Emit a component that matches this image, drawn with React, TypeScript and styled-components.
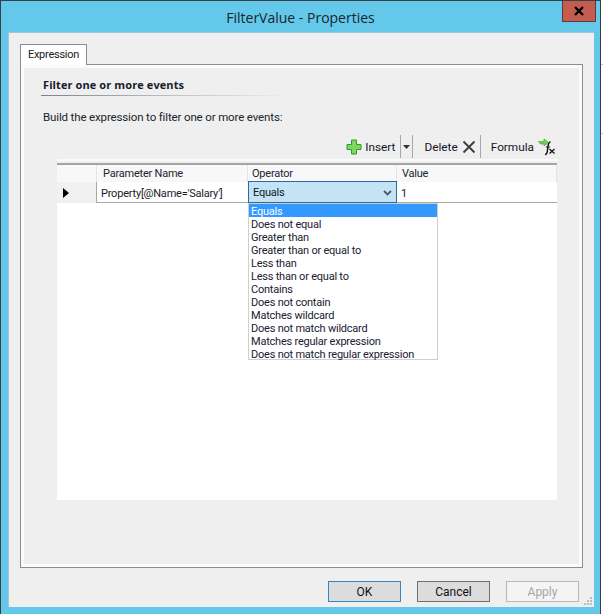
import styled, { createGlobalStyle } from "styled-components";

const GlobalStyle = createGlobalStyle`
  html, body {
    margin: 0;
    padding: 0;
    background: #fdfdfd;
    font-family: Roboto, "Open Sans", sans-serif;
    font-size: 11px;
    color: #101820;
  }
`;

const Desktop = styled.div`
  display: flex;
  width: 603px;
  height: 614px;
  overflow: hidden;
`;

const Side = styled.div`
  flex: 1;
  display: flex;
  flex-direction: column;
  padding-top: 64px;
  gap: 68px;
`;

const SideTick = styled.div`
  height: 1px;
  background: #c8c8c8;
`;

const Window = styled.div`
  width: 601px;
  height: 614px;
  box-sizing: border-box;
  display: flex;
  flex-direction: column;
  background: #63c8ea;
  border: 1px solid #3a3f44;
  border-bottom: 0;
`;

const TitleBar = styled.div`
  height: 31px;
  flex: none;
  display: flex;
  align-items: center;
  justify-content: center;
  position: relative;
  font-family: "Open Sans", sans-serif;
  font-size: 14px;
  color: #17262e;
  padding-top: 1px;
  box-sizing: border-box;
`;

const CloseButton = styled.div`
  position: absolute;
  top: 0;
  right: 4px;
  width: 34px;
  height: 21px;
  box-sizing: border-box;
  background: #c45c50;
  border: 1px solid #5c3c3a;
  border-top: 0;
  display: flex;
  align-items: center;
  justify-content: center;
`;

const Client = styled.div`
  flex: 1;
  margin: 0 6px 7px 7px;
  display: flex;
  flex-direction: column;
  box-sizing: border-box;
  padding: 12px 11px 4px 12px;
  background: #efefef;
  border-top: 1px solid #a5c3d2;
  border-left: 1px solid #a5c3d2;
`;

const TabStrip = styled.div`
  display: flex;
  height: 21px;
  flex: none;
  position: relative;
  z-index: 1;
  margin-left: -1px;
  margin-top: -1px;
`;

const Tab = styled.div`
  width: 67px;
  box-sizing: border-box;
  background: #ffffff;
  border: 1px solid #8c8c96;
  border-bottom: 0;
  display: flex;
  align-items: center;
  justify-content: center;
  padding-bottom: 2px;
  color: #1a1a1a;
  font-size: 11px;
  letter-spacing: -0.25px;
`;

const TabPanel = styled.div`
  height: 504px;
  flex: none;
  box-sizing: border-box;
  margin-left: -1px;
  margin-top: -1px;
  border: 1px solid #8c8c96;
  background: #efefef;
  box-shadow: inset 0 0 0 3px #fbfbfb;
  display: flex;
  flex-direction: column;
  padding: 13px 24px 0 22px;
`;

const Heading = styled.div`
  font-family: "Open Sans", sans-serif;
  font-size: 11px;
  font-weight: 700;
  letter-spacing: 0.1px;
  color: #14202c;
  line-height: 14px;
`;

const Divider = styled.div`
  height: 1px;
  width: 250px;
  margin: 3px 0 0 -2px;
  background: linear-gradient(to right, #80808a, #c8c8cc 60%, #efefef);
`;

const Intro = styled.div`
  margin-top: 13px;
  line-height: 16px;
  font-size: 11.5px;
  letter-spacing: -0.14px;
  color: #20242c;
`;

const Toolbar = styled.div`
  margin: 9px 0 0 14px;
  height: 25px;
  display: flex;
  align-items: center;
  justify-content: flex-end;
  border-bottom: 2px solid #fafafa;
  font-size: 11.8px;
`;

const ToolButton = styled.div<{ $gap: number; $end: number }>`
  display: flex;
  align-items: center;
  gap: ${(p) => p.$gap}px;
  color: #101828;
  padding-right: ${(p) => p.$end}px;
`;

const ToolSep = styled.div`
  width: 1px;
  height: 23px;
  background: #a8a8a8;
`;

const Gap = styled.div<{ $w: number }>`
  width: ${(p) => p.$w}px;
`;

const Grid = styled.div`
  margin: 2px 0 0 14px;
  width: 500px;
  height: 337px;
  align-self: flex-start;
  background: #ffffff;
  position: relative;
  letter-spacing: -0.22px;
`;

const HeaderRow = styled.div`
  display: grid;
  grid-template-columns: 40px 151px 149px 160px;
  height: 18px;
  box-sizing: border-box;
  border-top: 2px solid #a4a4a4;
  background: #ffffff;
`;

const HeaderCell = styled.div<{ $inset: number }>`
  background: #f8f8f8;
  border-right: 1px solid #e4e4e4;
  border-bottom: 1px solid #fff;
  padding-left: ${(p) => p.$inset}px;
  line-height: 17px;
  color: #1c2430;
`;

const DataRow = styled.div`
  display: grid;
  grid-template-columns: 40px 151px 149px 160px;
  height: 22px;
  box-sizing: border-box;
  border-top: 1px solid #a8a8a8;
  border-bottom: 1px solid #a8a8a8;
`;

const RowHeader = styled.div`
  background: #f0f0f0;
  border-right: 1px solid #a8a8a8;
  display: flex;
  align-items: center;
  padding-left: 6px;
`;

const Cell = styled.div`
  display: flex;
  align-items: center;
  padding: 1px 0 0 4px;
  color: #1a1a24;
`;

const Combo = styled.div`
  margin: -1px 0 0;
  height: 22px;
  box-sizing: border-box;
  background: #c4e3f5;
  border: 1px solid #2b6a9c;
  display: flex;
  align-items: center;
  justify-content: space-between;
  padding: 1px 4px 0 4px;
  color: #101820;
`;

const ValueCell = styled(Cell)`
  padding-left: 4px;
  color: #301040;
`;

const DropList = styled.div`
  position: absolute;
  left: 191px;
  top: 40px;
  width: 190px;
  height: 157px;
  box-sizing: border-box;
  background: #ffffff;
  border: 1px solid #cfcfcf;
`;

const DropItem = styled.div<{ $selected?: boolean }>`
  height: 13px;
  line-height: 15px;
  padding-left: 2px;
  white-space: nowrap;
  overflow: hidden;
  color: ${(p) => (p.$selected ? "#ffffff" : "#1a2030")};
  background: ${(p) => (p.$selected ? "#3399ff" : "transparent")};
`;

const Footer = styled.div`
  margin-top: 13px;
  display: flex;
  justify-content: flex-end;
  gap: 16px;
  padding-right: 4px;
  position: relative;
  font-size: 12px;
`;

const DialogButton = styled.div<{ $kind: "default" | "normal" | "disabled" }>`
  width: 73px;
  height: 21px;
  box-sizing: border-box;
  display: flex;
  align-items: center;
  justify-content: center;
  border: 1px solid
    ${(p) => (p.$kind === "default" ? "#3a84c0" : p.$kind === "normal" ? "#707070" : "#b4baba")};
  background: ${(p) => (p.$kind === "disabled" ? "#f4f4f4" : "#dcdcdc")};
  color: ${(p) => (p.$kind === "disabled" ? "#a6a6a6" : "#101018")};
`;

const Grip = styled.svg`
  position: absolute;
  right: -10px;
  bottom: -4px;
`;

const OPERATORS = [
  "Equals",
  "Does not equal",
  "Greater than",
  "Greater than or equal to",
  "Less than",
  "Less than or equal to",
  "Contains",
  "Does not contain",
  "Matches wildcard",
  "Does not match wildcard",
  "Matches regular expression",
  "Does not match regular expression",
];

function PlusIcon() {
  return (
    <svg width="16" height="16" viewBox="0 0 16 16">
      <path
        d="M5.500 1h5v4.500h4.500v5h-4.500v4.500h-5v-4.500h-4.500v-5h4.500z"
        fill="#7fd85a"
        stroke="#2f9a3a"
        strokeWidth="1"
      />
    </svg>
  );
}

function DeleteIcon() {
  return (
    <svg width="14" height="14" viewBox="0 0 14 14">
      <path d="M1.500 1.500L12.500 12.500M12.500 1.500L1.500 12.500" stroke="#3c3c40" strokeWidth="1.800" fill="none" />
    </svg>
  );
}

function FormulaIcon() {
  return (
    <svg width="18" height="18" viewBox="0 0 18 18">
      <path d="M12.500 4c-1.500 0-2 1-2.300 3l-.9 6.500c-.2 1.600-.8 3-2.300 3" stroke="#151515" strokeWidth="1.500" fill="none" />
      <path d="M8 9h4" stroke="#151515" strokeWidth="1" fill="none" />
      <path d="M11.500 11l5 4.500M16.500 11l-5 4.500" stroke="#151515" strokeWidth="1.300" fill="none" />
      <path d="M.5 3.500h5.500v-2.500l4.500 3.500-4.500 3.500v-2h-3.500z" fill="#72d04c" stroke="#4aa838" strokeWidth="0.700" />
    </svg>
  );
}

function ChevronDown() {
  return (
    <svg width="9" height="6" viewBox="0 0 9 6">
      <path d="M1 1l3.500 3.500L8 1" stroke="#4c5a64" strokeWidth="1.800" fill="none" />
    </svg>
  );
}

export default function App() {
  return (
    <>
      <GlobalStyle />
      <Desktop>
        <Window>
          <TitleBar>
            FilterValue - Properties
            <CloseButton>
              <svg width="12" height="10" viewBox="0 0 12 10">
                <path d="M2 1l8 8M10 1l-8 8" stroke="#000" strokeWidth="2.400" fill="none" />
              </svg>
            </CloseButton>
          </TitleBar>
          <Client>
            <TabStrip>
              <Tab>Expression</Tab>
            </TabStrip>
            <TabPanel>
              <Heading>Filter one or more events</Heading>
              <Divider />
              <Intro>Build the expression to filter one or more events:</Intro>
              <Toolbar>
                <ToolButton $gap={3} $end={5}>
                  <PlusIcon />
                  Insert
                </ToolButton>
                <ToolSep />
                <Gap $w={2} />
                <svg width="7" height="4" viewBox="0 0 7 4">
                  <path d="M0 0h7L3.500 4z" fill="#303030" />
                </svg>
                <Gap $w={2} />
                <ToolSep />
                <Gap $w={11} />
                <ToolButton $gap={4} $end={4}>
                  Delete
                  <DeleteIcon />
                </ToolButton>
                <ToolSep />
                <Gap $w={10} />
                <ToolButton $gap={4} $end={2}>
                  Formula
                  <FormulaIcon />
                </ToolButton>
              </Toolbar>
              <Grid>
                <HeaderRow>
                  <HeaderCell $inset={0} />
                  <HeaderCell $inset={6}>Parameter Name</HeaderCell>
                  <HeaderCell $inset={4}>Operator</HeaderCell>
                  <HeaderCell $inset={5}>Value</HeaderCell>
                </HeaderRow>
                <DataRow>
                  <RowHeader>
                    <svg width="6" height="10" viewBox="0 0 6 10">
                      <path d="M0 0l6 5-6 5z" fill="#000" />
                    </svg>
                  </RowHeader>
                  <Cell>Property[@Name='Salary']</Cell>
                  <Combo>
                    Equals
                    <ChevronDown />
                  </Combo>
                  <ValueCell>1</ValueCell>
                </DataRow>
                <DropList>
                  {OPERATORS.map((op, i) => (
                    <DropItem key={op} $selected={i === 0}>
                      {op}
                    </DropItem>
                  ))}
                </DropList>
              </Grid>
            </TabPanel>
            <Footer>
              <DialogButton $kind="default">OK</DialogButton>
              <DialogButton $kind="normal">Cancel</DialogButton>
              <DialogButton $kind="disabled">Apply</DialogButton>
              <Grip width="10" height="10" viewBox="0 0 10 10">
                <path d="M7 1h2v2H7zM4 4h2v2H4zM7 4h2v2H7zM1 7h2v2H1zM4 7h2v2H4zM7 7h2v2H7z" fill="#bdbdbd" />
              </Grip>
            </Footer>
          </Client>
        </Window>
        <Side>
          <SideTick />
          <SideTick />
        </Side>
      </Desktop>
    </>
  );
}
